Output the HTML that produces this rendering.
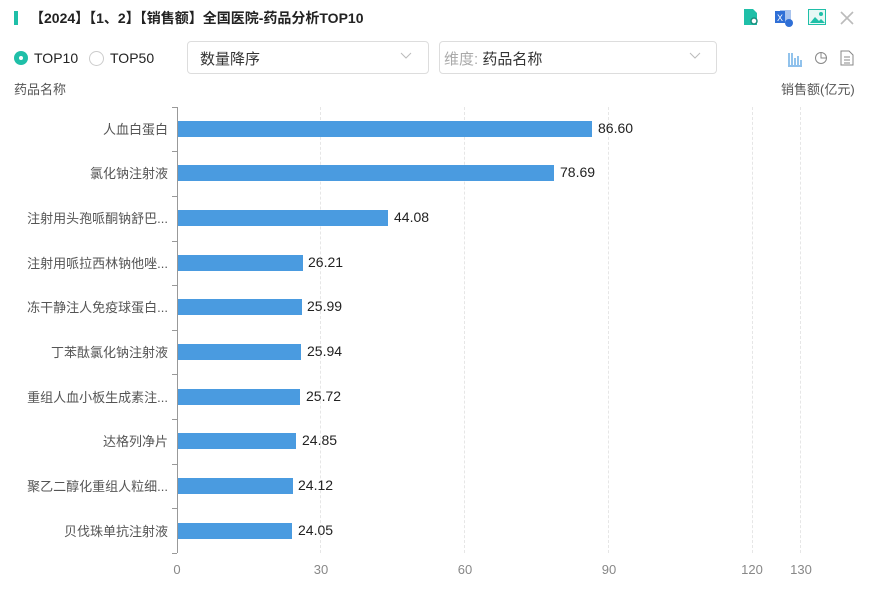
<html><head><style>
body{margin:0;width:876px;height:590px;background:#fff;font-family:"Liberation Sans","Noto Sans CJK SC",sans-serif;position:relative;overflow:hidden}
.a{position:absolute}
.lbl{position:absolute;right:708px;font-size:13px;color:#555;white-space:nowrap;margin-top:-2px}
.bar{position:absolute;left:178px;height:16px;background:#4a9be0}
.val{position:absolute;font-size:14px;color:#222;margin-top:-1px}
.g{position:absolute;top:107px;height:446px;border-left:1px dashed #e6e6e6}
.t{position:absolute;top:562px;font-size:13px;color:#888;transform:translateX(-50%)}
</style></head><body>
<div class="a" style="left:14px;top:11px;width:4px;height:14px;background:#1fbfa8"></div>
<div class="a" style="left:30px;top:8px;font-size:14px;font-weight:bold;color:#222">【2024】【1、2】【销售额】全国医院-药品分析TOP10</div>
<svg class="a" style="left:742px;top:8px" width="18" height="18"><path d="M2 1h9l4 4v12H2z" fill="#1fbfa8"/><circle cx="12" cy="13" r="3" fill="#fff" stroke="#1a8f7f" stroke-width="1.5"/></svg>
<svg class="a" style="left:774px;top:8px" width="20" height="20"><rect x="6" y="2" width="11" height="13" fill="#a9c4ee"/><rect x="1" y="3" width="10" height="12" fill="#2f6fd6"/><text x="3" y="13" font-size="9" fill="#fff" font-family="Liberation Sans">X</text><circle cx="15" cy="15" r="4" fill="#2f6fd6"/></svg>
<svg class="a" style="left:808px;top:9px" width="18" height="16"><rect x="0.5" y="0.5" width="17" height="15" fill="#e7f8f5" stroke="#1fbfa8"/><path d="M2 14l5-6 4 4 2-2 4 4z" fill="#1fbfa8"/><circle cx="13" cy="5" r="2" fill="#1fbfa8"/></svg>
<svg class="a" style="left:840px;top:11px" width="14" height="14"><path d="M1 1L13 13M13 1L1 13" stroke="#bbb" stroke-width="1.6"/></svg>
<div class="a" style="left:14px;top:51px;width:14px;height:14px;border-radius:50%;background:#1fbfa8"></div>
<div class="a" style="left:19px;top:56px;width:4px;height:4px;border-radius:50%;background:#fff"></div>
<div class="a" style="left:34px;top:50px;font-size:14px;color:#222">TOP10</div>
<div class="a" style="left:89px;top:51px;width:13px;height:13px;border-radius:50%;border:1px solid #ccc"></div>
<div class="a" style="left:110px;top:50px;font-size:14px;color:#222">TOP50</div>
<div class="a" style="left:187px;top:41px;width:240px;height:31px;border:1px solid #ddd;border-radius:4px"></div>
<div class="a" style="left:200px;top:48px;font-size:15px;color:#333">数量降序</div>
<svg class="a" style="left:400px;top:52px" width="12" height="8"><path d="M1 1l5 5 5-5" fill="none" stroke="#bbb"/></svg>
<div class="a" style="left:439px;top:41px;width:276px;height:31px;border:1px solid #ddd;border-radius:4px"></div>
<div class="a" style="left:444px;top:48px;font-size:15px;color:#aaa">维度: <span style="color:#333">药品名称</span></div>
<svg class="a" style="left:689px;top:52px" width="12" height="8"><path d="M1 1l5 5 5-5" fill="none" stroke="#bbb"/></svg>
<svg class="a" style="left:787px;top:51px" width="16" height="16"><path d="M1 15h14M2 2v12M5 2v12M8 7v7M11 5v9M14 9v5" stroke="#4a9be0" stroke-width="1.2" fill="none"/></svg>
<svg class="a" style="left:814px;top:51px" width="14" height="14"><circle cx="7" cy="7" r="5.5" fill="none" stroke="#888"/><path d="M7 1.5V7h5.5" fill="none" stroke="#888"/></svg>
<svg class="a" style="left:840px;top:50px" width="14" height="16"><path d="M1 1h8l4 4v10H1z M4 7h6M4 10h6M4 13h6" fill="none" stroke="#888"/></svg>
<div class="a" style="left:14px;top:79px;font-size:13px;color:#555">药品名称</div>
<div class="a" style="left:781px;top:79px;font-size:13px;color:#555">销售额(亿元)</div>
<div class="g" style="left:320px"></div><div class="g" style="left:464px"></div><div class="g" style="left:608px"></div><div class="g" style="left:752px"></div><div class="g" style="left:800px"></div>
<div class="a" style="left:177px;top:107px;width:1px;height:446px;background:#999"></div>
<div class="a" style="left:172px;top:107px;width:5px;height:1px;background:#999"></div>
<div class="a" style="left:172px;top:151px;width:5px;height:1px;background:#999"></div>
<div class="a" style="left:172px;top:196px;width:5px;height:1px;background:#999"></div>
<div class="a" style="left:172px;top:241px;width:5px;height:1px;background:#999"></div>
<div class="a" style="left:172px;top:285px;width:5px;height:1px;background:#999"></div>
<div class="a" style="left:172px;top:330px;width:5px;height:1px;background:#999"></div>
<div class="a" style="left:172px;top:374px;width:5px;height:1px;background:#999"></div>
<div class="a" style="left:172px;top:419px;width:5px;height:1px;background:#999"></div>
<div class="a" style="left:172px;top:464px;width:5px;height:1px;background:#999"></div>
<div class="a" style="left:172px;top:508px;width:5px;height:1px;background:#999"></div>
<div class="a" style="left:172px;top:553px;width:5px;height:1px;background:#999"></div>

<div class="lbl" style="top:121px">人血白蛋白</div><div class="bar" style="top:121px;width:414px"></div><div class="val" style="left:598px;top:121px">86.60</div>
<div class="lbl" style="top:165px">氯化钠注射液</div><div class="bar" style="top:165px;width:376px"></div><div class="val" style="left:560px;top:165px">78.69</div>
<div class="lbl" style="top:210px">注射用头孢哌酮钠舒巴...</div><div class="bar" style="top:210px;width:210px"></div><div class="val" style="left:394px;top:210px">44.08</div>
<div class="lbl" style="top:255px">注射用哌拉西林钠他唑...</div><div class="bar" style="top:255px;width:125px"></div><div class="val" style="left:308px;top:255px">26.21</div>
<div class="lbl" style="top:299px">冻干静注人免疫球蛋白...</div><div class="bar" style="top:299px;width:124px"></div><div class="val" style="left:307px;top:299px">25.99</div>
<div class="lbl" style="top:344px">丁苯酞氯化钠注射液</div><div class="bar" style="top:344px;width:123px"></div><div class="val" style="left:307px;top:344px">25.94</div>
<div class="lbl" style="top:389px">重组人血小板生成素注...</div><div class="bar" style="top:389px;width:122px"></div><div class="val" style="left:306px;top:389px">25.72</div>
<div class="lbl" style="top:433px">达格列净片</div><div class="bar" style="top:433px;width:118px"></div><div class="val" style="left:302px;top:433px">24.85</div>
<div class="lbl" style="top:478px">聚乙二醇化重组人粒细...</div><div class="bar" style="top:478px;width:115px"></div><div class="val" style="left:298px;top:478px">24.12</div>
<div class="lbl" style="top:523px">贝伐珠单抗注射液</div><div class="bar" style="top:523px;width:114px"></div><div class="val" style="left:298px;top:523px">24.05</div>

<div class="t" style="left:177px">0</div><div class="t" style="left:321px">30</div><div class="t" style="left:465px">60</div><div class="t" style="left:609px">90</div><div class="t" style="left:752px">120</div><div class="t" style="left:801px">130</div>
</body></html>
